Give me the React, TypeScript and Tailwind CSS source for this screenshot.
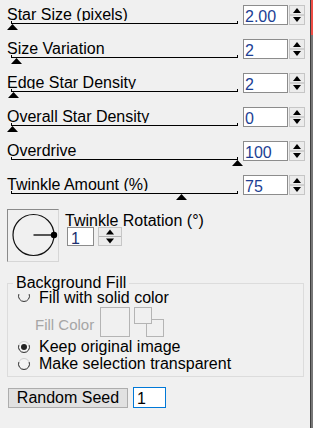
import React from "react";

type RowData = { label: string; value: string; thumb: number };

const rows: RowData[] = [
  { label: "Star Size (pixels)", value: "2.00", thumb: 12 },
  { label: "Size Variation", value: "2", thumb: 16 },
  { label: "Edge Star Density", value: "2", thumb: 13 },
  { label: "Overall Star Density", value: "0", thumb: 12 },
  { label: "Overdrive", value: "100", thumb: 237 },
  { label: "Twinkle Amount (%)", value: "75", thumb: 181 },
];

function Spin({ w, h }: { w: number; h: number }) {
  const cx = w / 2;
  const mid = h / 2;
  return (
    <svg width={w} height={h} className="block shrink-0">
      <rect x={0.5} y={0.5} width={w - 1} height={h - 1} fill="#ececec" stroke="#c6c6c6" />
      <line x1={1} x2={w - 1} y1={mid} y2={mid} stroke="#b4b4b4" />
      <polygon points={`${cx - 4},${mid - 2} ${cx + 4},${mid - 2} ${cx},${mid - 7}`} fill="#000" />
      <polygon points={`${cx - 4},${mid + 2} ${cx + 4},${mid + 2} ${cx},${mid + 7}`} fill="#000" />
    </svg>
  );
}

function SliderRow({ label, value, thumb }: RowData) {
  return (
    <div className="flex h-[34px]">
      <div className="w-[243px] shrink-0">
        <div className="mt-[2px] h-[14px] overflow-hidden whitespace-nowrap pl-[7px] text-[16px] leading-[16px] text-black">
          {label}
        </div>
        <div className="relative ml-[11px] h-[3px] w-[227px] border-x border-b border-black">
          <svg
            width="11"
            height="6"
            className="absolute top-[3px] block"
            style={{ left: thumb - 5.5 - 12 }}
          >
            <polygon points="0,6 11,6 5.5,0" fill="#000" />
          </svg>
        </div>
      </div>
      <div className="h-[20px] w-[45px] shrink-0 overflow-hidden border border-[#8c8c8c] bg-white pl-[1px] pt-[3px] text-[16px] leading-[16px] text-[#1c3f94]">
        {value}
      </div>
      <div className="ml-[1px]">
        <Spin w={16} h={20} />
      </div>
    </div>
  );
}

function Radio({ checked }: { checked?: boolean }) {
  return (
    <svg width="14" height="14" className="block shrink-0">
      <circle cx="7" cy="7" r="5.5" fill="#f4f4f4" stroke="#cfcfcf" />
      <path d="M1.83,5.12 A5.5,5.5 0 1 0 12.17,5.12" fill="none" stroke="#333" />
      {checked && <circle cx="7" cy="7" r="3" fill="#222" />}
    </svg>
  );
}

export default function App() {
  return (
    <div className="flex h-[428px] w-[313px] overflow-hidden bg-[#f0f0f0] font-['Liberation_Sans',Arial,sans-serif] text-black">
      <div className="flex w-[310px] shrink-0 flex-col pt-[5px]">
        {rows.map((r) => (
          <SliderRow key={r.label} {...r} />
        ))}

        {/* Twinkle rotation */}
        <div className="flex h-[53px] items-start">
          <div className="ml-[7px] h-[53px] w-[52px] shrink-0 border border-l-[#8a8a8a] border-t-[#8a8a8a] border-r-[#d6d6d6] border-b-[#d6d6d6]">
            <svg width="50" height="51" className="block">
              <circle cx="25.5" cy="25" r="20.5" fill="none" stroke="#111" strokeWidth="1.2" />
              <line x1="25.5" y1="25" x2="46" y2="25" stroke="#111" strokeWidth="1.4" />
              <circle cx="46" cy="25" r="3.2" fill="#000" />
            </svg>
          </div>
          <div className="ml-[6px] flex flex-col">
            <div className="mt-[4px] h-[14px] whitespace-nowrap text-[16px] leading-[16px]">
              Twinkle Rotation (°)
            </div>
            <div className="ml-[2px] flex items-start">
              <div className="h-[19px] w-[27px] overflow-hidden border border-[#8c8c8c] bg-white pl-[3px] pt-[3px] text-[16px] leading-[16px] text-[#1c2f70]">
                1
              </div>
              <div className="ml-[4px]">
                <Spin w={24} h={19} />
              </div>
            </div>
          </div>
        </div>

        {/* Background fill group */}
        <fieldset className="ml-[7px] mt-[13px] w-[297px] border border-[#dcdcdc] pb-[4px]">
          <legend className="ml-[5px] px-[3px] text-[16px] leading-[16px]">Background Fill</legend>
          <div className="-mt-[1px] flex h-[16px] items-start">
            <div className="ml-[9px] overflow-hidden">
              <svg width="14" height="14" viewBox="0 1 14 14" className="block">
                <path d="M1.83,5.12 A5.5,5.5 0 1 0 12.17,5.12" fill="none" stroke="#333" />
              </svg>
            </div>
            <div className="ml-[8px] whitespace-nowrap text-[16px] leading-[16px]">Fill with solid color</div>
          </div>
          <div className="flex h-[33px] items-start">
            <div className="ml-[27px] mt-[11px] w-[65px] shrink-0 whitespace-nowrap text-[15px] leading-[16px] text-[#a6a6a6]">
              Fill Color
            </div>
            <div className="mt-[1px] h-[30px] w-[30px] shrink-0 border border-[#b4b4b4]" />
            <svg width="31" height="31" className="ml-[4px] mt-[1px] block shrink-0">
              <rect x="12.5" y="12.5" width="17" height="17" fill="#f0f0f0" stroke="#b4b4b4" />
              <rect x="0.5" y="0.5" width="17" height="16" fill="#f0f0f0" stroke="#b4b4b4" />
            </svg>
          </div>
          <div className="flex h-[17px] items-start">
            <div className="ml-[9px] mt-[1px]">
              <Radio checked />
            </div>
            <div className="ml-[8px] whitespace-nowrap text-[16px] leading-[16px]">Keep original image</div>
          </div>
          <div className="flex h-[16px] items-start">
            <div className="ml-[9px] mt-[1px]">
              <Radio />
            </div>
            <div className="ml-[8px] whitespace-nowrap text-[16px] leading-[16px]">Make selection transparent</div>
          </div>
        </fieldset>

        {/* Random seed */}
        <div className="mt-[10px] flex items-start">
          <div className="ml-[8px] mt-[1px] flex h-[20px] w-[120px] items-center justify-center border border-[#adadad] bg-[#e1e1e1] text-[16px] leading-[18px]">
            Random Seed
          </div>
          <div className="ml-[5px] h-[21px] w-[33px] overflow-hidden border border-[#0078d7] bg-white pl-[3px] pt-[3px] text-[16px] leading-[16px] text-black">
            1
          </div>
        </div>
      </div>
      <div className="flex w-[3px] shrink-0 flex-col border-l border-[#3f3f3f]">
        <div className="h-[35px] bg-[#ee4d45]" />
        <div className="flex-1 bg-[#777777]" />
      </div>
    </div>
  );
}
